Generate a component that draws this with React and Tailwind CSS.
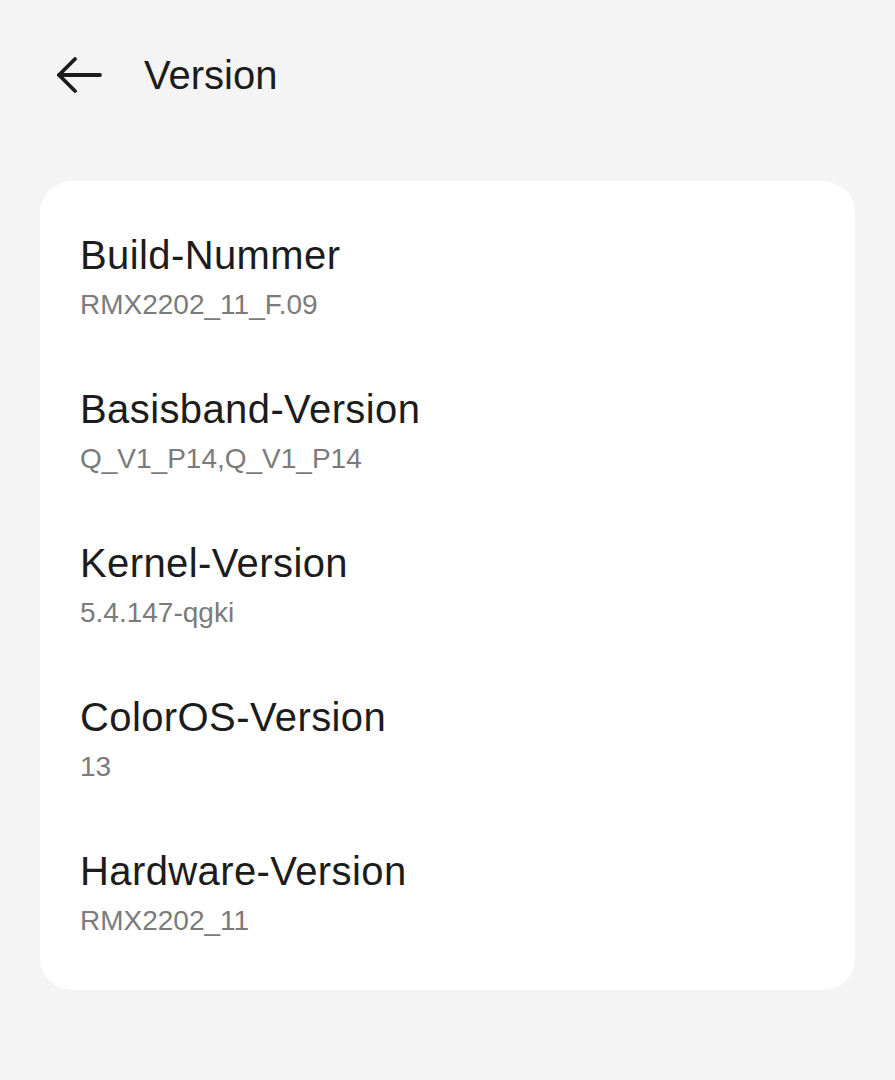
import React from 'react';

const items = [
  { label: 'Build-Nummer', value: 'RMX2202_11_F.09' },
  { label: 'Basisband-Version', value: 'Q_V1_P14,Q_V1_P14' },
  { label: 'Kernel-Version', value: '5.4.147-qgki' },
  { label: 'ColorOS-Version', value: '13' },
  { label: 'Hardware-Version', value: 'RMX2202_11' },
];

const BackArrow = () => (
  <svg width="46" height="36" viewBox="0 0 46 36" fill="none" stroke="#1c1c1c" strokeWidth="3.8" strokeLinecap="round" strokeLinejoin="round">
    <path d="M3 18H44" />
    <path d="M19 2L3 18L19 34" />
  </svg>
);

const App = () => {
  return (
    <div className="min-h-[1080px] w-full bg-[#f4f4f4] font-['Liberation_Sans',sans-serif]">
      {/* Header */}
      <div className="flex h-[150px] items-center pl-[56px]">
        <BackArrow />
        <h1 className="ml-[42px] text-[40px] leading-none text-[#1c1c1c]">Version</h1>
      </div>

      {/* Card */}
      <div className="mx-[40px] mt-[31px] flex flex-col gap-[54px] rounded-[32px] bg-white px-[40px] pt-[48px] pb-[45px]">
        {items.map((item) => (
          <div key={item.label} className="flex flex-col">
            <div className="flex h-[52px] items-center text-[40px] leading-none tracking-[0.4px] text-[#1c1c1c]">{item.label}</div>
            <div className="flex h-[48px] items-center text-[28px] leading-none text-[#7b7b7b]">{item.value}</div>
          </div>
        ))}
      </div>
    </div>
  );
};

export default App;
